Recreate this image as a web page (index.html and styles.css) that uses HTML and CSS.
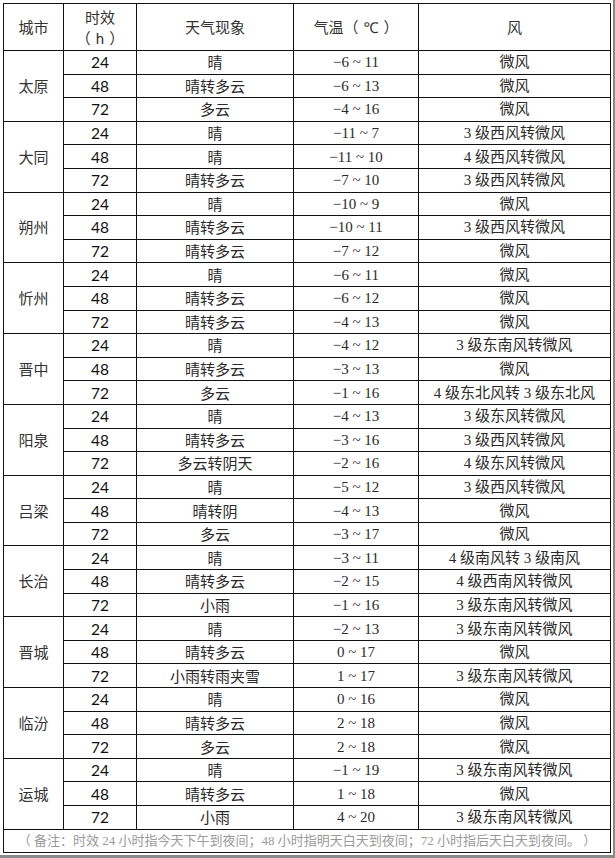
FILE: index.html
```html
<!DOCTYPE html>
<html lang="zh">
<head>
<meta charset="utf-8">
<link rel="stylesheet" href="styles.css">
</head>
<body>
<div class="page">
<table class="wx">
<colgroup>
<col class="c-city"><col class="c-h"><col class="c-phen"><col class="c-temp"><col class="c-wind">
</colgroup>
<thead>
<tr class="head">
<th>城市</th>
<th class="two">时效<br>（<span class="gap">h</span>）</th>
<th>天气现象</th>
<th>气温（<span class="gap">℃</span>）</th>
<th>风</th>
</tr>
</thead>
<tbody>
<tr><td class="city" rowspan="3">太原</td><td class="num">24</td><td>晴</td><td class="t">−6 ~ 11</td><td class="w">微风</td></tr>
<tr><td class="num">48</td><td>晴转多云</td><td class="t">−6 ~ 13</td><td class="w">微风</td></tr>
<tr><td class="num">72</td><td>多云</td><td class="t">−4 ~ 16</td><td class="w">微风</td></tr>

<tr><td class="city" rowspan="3">大同</td><td class="num">24</td><td>晴</td><td class="t">−11 ~ 7</td><td class="w">3 级西风转微风</td></tr>
<tr><td class="num">48</td><td>晴</td><td class="t">−11 ~ 10</td><td class="w">4 级西风转微风</td></tr>
<tr><td class="num">72</td><td>晴转多云</td><td class="t">−7 ~ 10</td><td class="w">3 级西风转微风</td></tr>

<tr><td class="city" rowspan="3">朔州</td><td class="num">24</td><td>晴</td><td class="t">−10 ~ 9</td><td class="w">微风</td></tr>
<tr><td class="num">48</td><td>晴转多云</td><td class="t">−10 ~ 11</td><td class="w">3 级西风转微风</td></tr>
<tr><td class="num">72</td><td>晴转多云</td><td class="t">−7 ~ 12</td><td class="w">微风</td></tr>

<tr><td class="city" rowspan="3">忻州</td><td class="num">24</td><td>晴</td><td class="t">−6 ~ 11</td><td class="w">微风</td></tr>
<tr><td class="num">48</td><td>晴转多云</td><td class="t">−6 ~ 12</td><td class="w">微风</td></tr>
<tr><td class="num">72</td><td>晴转多云</td><td class="t">−4 ~ 13</td><td class="w">微风</td></tr>

<tr><td class="city" rowspan="3">晋中</td><td class="num">24</td><td>晴</td><td class="t">−4 ~ 12</td><td class="w">3 级东南风转微风</td></tr>
<tr><td class="num">48</td><td>晴转多云</td><td class="t">−3 ~ 13</td><td class="w">微风</td></tr>
<tr><td class="num">72</td><td>多云</td><td class="t">−1 ~ 16</td><td class="w">4 级东北风转 3 级东北风</td></tr>

<tr><td class="city" rowspan="3">阳泉</td><td class="num">24</td><td>晴</td><td class="t">−4 ~ 13</td><td class="w">3 级东风转微风</td></tr>
<tr><td class="num">48</td><td>晴转多云</td><td class="t">−3 ~ 16</td><td class="w">3 级西风转微风</td></tr>
<tr><td class="num">72</td><td>多云转阴天</td><td class="t">−2 ~ 16</td><td class="w">4 级东风转微风</td></tr>

<tr><td class="city" rowspan="3">吕梁</td><td class="num">24</td><td>晴</td><td class="t">−5 ~ 12</td><td class="w">3 级西风转微风</td></tr>
<tr><td class="num">48</td><td>晴转阴</td><td class="t">−4 ~ 13</td><td class="w">微风</td></tr>
<tr><td class="num">72</td><td>多云</td><td class="t">−3 ~ 17</td><td class="w">微风</td></tr>

<tr><td class="city" rowspan="3">长治</td><td class="num">24</td><td>晴</td><td class="t">−3 ~ 11</td><td class="w">4 级南风转 3 级南风</td></tr>
<tr><td class="num">48</td><td>晴转多云</td><td class="t">−2 ~ 15</td><td class="w">4 级西南风转微风</td></tr>
<tr><td class="num">72</td><td>小雨</td><td class="t">−1 ~ 16</td><td class="w">3 级东南风转微风</td></tr>

<tr><td class="city" rowspan="3">晋城</td><td class="num">24</td><td>晴</td><td class="t">−2 ~ 13</td><td class="w">3 级东南风转微风</td></tr>
<tr><td class="num">48</td><td>晴转多云</td><td class="t">0 ~ 17</td><td class="w">微风</td></tr>
<tr><td class="num">72</td><td>小雨转雨夹雪</td><td class="t">1 ~ 17</td><td class="w">3 级东南风转微风</td></tr>

<tr><td class="city" rowspan="3">临汾</td><td class="num">24</td><td>晴</td><td class="t">0 ~ 16</td><td class="w">微风</td></tr>
<tr><td class="num">48</td><td>晴转多云</td><td class="t">2 ~ 18</td><td class="w">微风</td></tr>
<tr><td class="num">72</td><td>多云</td><td class="t">2 ~ 18</td><td class="w">微风</td></tr>

<tr><td class="city" rowspan="3">运城</td><td class="num">24</td><td>晴</td><td class="t">−1 ~ 19</td><td class="w">3 级东南风转微风</td></tr>
<tr><td class="num">48</td><td>晴转多云</td><td class="t">1 ~ 18</td><td class="w">微风</td></tr>
<tr><td class="num">72</td><td>小雨</td><td class="t">4 ~ 20</td><td class="w">3 级东南风转微风</td></tr>

<tr class="note"><td colspan="5">（ 备注：时效 24 小时指今天下午到夜间；48 小时指明天白天到夜间；72 小时指后天白天到夜间。 ）</td></tr>
</tbody>
</table>
</div>
</body>
</html>
```

FILE: styles.css
```css
html, body {
  margin: 0;
  padding: 0;
  background: #ffffff;
}

.page {
  width: 615px;
  height: 858px;
  box-sizing: border-box;
  padding: 3px 0 0 3px;
  border-right: 2px solid #8a8a8a;
  border-bottom: 3px solid #8a8a8a;
  background: #fff;
}

.wx {
  border-collapse: collapse;
  table-layout: fixed;
  width: 607px;
  font-family: "Noto Sans CJK SC", sans-serif;
  font-size: 15px;
  color: #2a2a2a;
}

.c-city { width: 60px; }
.c-h { width: 73px; }
.c-phen { width: 157px; }
.c-temp { width: 125px; }
.c-wind { width: 192px; }

.wx th, .wx td {
  border: 1px solid #111;
  padding: 0;
  text-align: center;
  vertical-align: middle;
  line-height: 20px;
  white-space: nowrap;
  font-weight: normal;
}

.head th {
  height: 46px;
  color: #333;
}

.head th.two {
  line-height: 21px;
}

.gap {
  display: inline-block;
  padding: 0 5px;
  font-family: "Lato", "Noto Sans", "Noto Sans CJK SC", sans-serif;
}

.wx tbody tr {
  height: 23.6px;
}

.num {
  font-family: "Lato", "Noto Sans", sans-serif;
  font-size: 15.5px;
  color: #111;
}

.t, .w {
  font-family: "Liberation Serif", "Noto Sans CJK SC", serif;
  font-size: 15px;
}

.city {
  color: #333;
}

.note td {
  height: 22px;
  font-family: "Liberation Serif", "Noto Sans CJK SC", serif;
  font-size: 13px;
  color: #9a9a9a;
}
```
